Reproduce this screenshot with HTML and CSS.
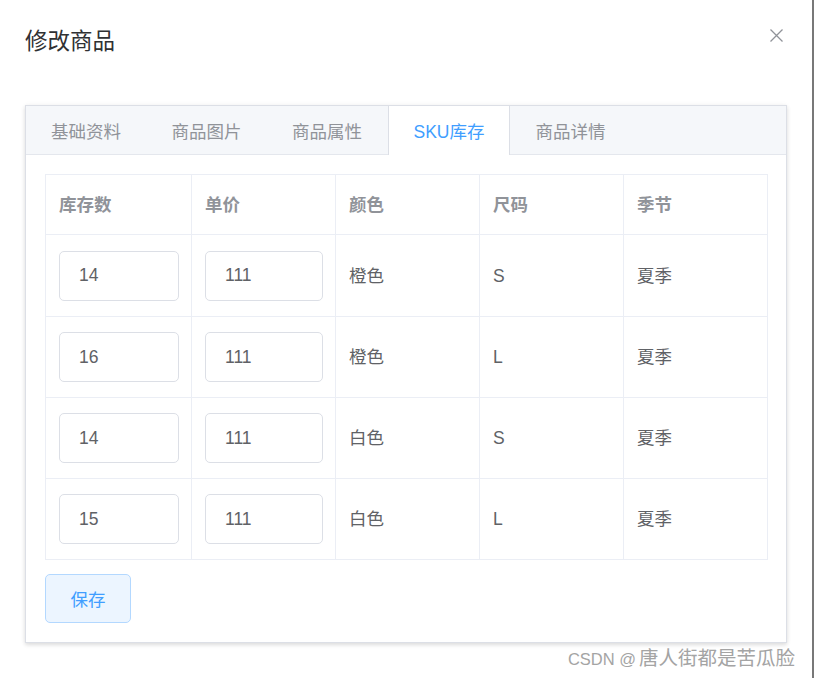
FILE: index.html
```html
<!DOCTYPE html>
<html lang="zh-CN">
<head>
<meta charset="utf-8">
<title>修改商品</title>
<link rel="stylesheet" href="styles.css">
</head>
<body>
<div class="page">
  <div class="dialog">
    <header class="dlg-head">
      <h1 class="dlg-title">修改商品</h1>
      <button class="dlg-close" aria-label="关闭">
        <svg width="13" height="13" viewBox="0 0 13 13"><path d="M0.5 0.5 L12.5 12.5 M12.5 0.5 L0.5 12.5" stroke="#909399" stroke-width="1.3" fill="none"/></svg>
      </button>
    </header>
    <div class="card">
      <div class="tabs-head">
        <div class="tab">基础资料</div>
        <div class="tab">商品图片</div>
        <div class="tab">商品属性</div>
        <div class="tab active">SKU库存</div>
        <div class="tab">商品详情</div>
      </div>
      <div class="tab-body">
        <table class="sku">
          <colgroup>
            <col class="c-first">
            <col class="c-std">
            <col class="c-std">
            <col class="c-std">
            <col class="c-std">
          </colgroup>
          <thead>
            <tr><th>库存数</th><th>单价</th><th>颜色</th><th>尺码</th><th>季节</th></tr>
          </thead>
          <tbody>
            <tr class="first-row"><td><input class="inp" value="14"></td><td><input class="inp" value="111"></td><td>橙色</td><td>S</td><td>夏季</td></tr>
            <tr><td><input class="inp" value="16"></td><td><input class="inp" value="111"></td><td>橙色</td><td>L</td><td>夏季</td></tr>
            <tr><td><input class="inp" value="14"></td><td><input class="inp" value="111"></td><td>白色</td><td>S</td><td>夏季</td></tr>
            <tr><td><input class="inp" value="15"></td><td><input class="inp" value="111"></td><td>白色</td><td>L</td><td>夏季</td></tr>
          </tbody>
        </table>
        <button class="btn-save">保存</button>
      </div>
    </div>
    <div class="watermark"><span class="wm-latin">CSDN @</span>唐人街都是苦瓜脸<span class="wm-ghost">博客</span></div>
  </div>
  <div class="edge"></div>
</div>
</body>
</html>
```

FILE: styles.css
```css
html, body {
  margin: 0;
  padding: 0;
  background: #fff;
}
body {
  font-family: "Liberation Sans", "Noto Sans CJK SC", sans-serif;
  color: #606266;
}
.page {
  display: flex;
  height: 678px;
  overflow: hidden;
}
.dialog {
  flex: 1;
  display: flex;
  flex-direction: column;
  background: #fff;
}
.edge {
  width: 2px;
  background: #787878;
}
.dlg-head {
  display: flex;
  justify-content: space-between;
  align-items: flex-start;
  height: 105px;
  box-sizing: border-box;
  padding: 28px 29px 0 25px;
}
.dlg-title {
  margin: 0;
  font-size: 22.5px;
  line-height: 28px;
  font-weight: normal;
  color: #303133;
}
.dlg-close {
  margin-top: 1px;
  padding: 0;
  border: 0;
  background: transparent;
  width: 13px;
  height: 13px;
  line-height: 0;
}
.card {
  margin: 0 25px;
  border: 1px solid #dcdfe6;
  background: #fff;
  box-shadow: 0 2px 4px 0 rgba(0, 0, 0, 0.12), 0 0 6px 0 rgba(0, 0, 0, 0.04);
}
.tabs-head {
  display: flex;
  height: 48px;
  background: #f5f7fa;
  border-bottom: 1px solid #e4e7ed;
}
.tab {
  padding: 0 25px;
  height: 48px;
  line-height: 52px;
  font-size: 17.5px;
  color: #909399;
  white-space: nowrap;
}
.tab:first-child {
  padding-left: 25px;
}
.tab:nth-child(2),
.tab:nth-child(3),
.tab:nth-child(4) {
  margin-left: 0.5px;
}
.tab.active {
  color: #409eff;
  background: #fff;
  border-left: 1px solid #dcdfe6;
  border-right: 1px solid #dcdfe6;
  height: 49px;
}
.tab-body {
  padding: 19px 18px 19px 19px;
}
.sku {
  border-collapse: collapse;
  table-layout: fixed;
  width: 722px;
}
.c-first { width: 146px; }
.c-std { width: 144px; }
.sku th,
.sku td {
  border: 1px solid #ebeef5;
  padding: 0 12px 0 13px;
  text-align: left;
  font-size: 17.5px;
  line-height: 24px;
  color: #606266;
}
.sku th {
  height: 59px;
  color: #909399;
  font-weight: bold;
}
.sku td {
  height: 80px;
}
.sku .first-row td {
  height: 81px;
}
.inp {
  display: block;
  box-sizing: border-box;
  width: 100%;
  height: 50px;
  margin: 0;
  padding: 0 19px;
  border: 1px solid #dcdfe6;
  border-radius: 5px;
  background: #fff;
  font-family: "Liberation Sans", "Noto Sans CJK SC", sans-serif;
  font-size: 17.5px;
  color: #606266;
  outline: none;
}
.btn-save {
  display: block;
  margin-top: 14px;
  width: 86px;
  height: 49px;
  padding: 0;
  background: #ecf5ff;
  border: 1px solid #b3d8ff;
  border-radius: 5px;
  color: #409eff;
  font-family: "Liberation Sans", "Noto Sans CJK SC", sans-serif;
  font-size: 17.5px;
}
.watermark {
  position: relative;
  align-self: flex-end;
  margin: 4px 17px 0 0;
  font-size: 19.5px;
  line-height: 22px;
  color: #a4a4a4;
  white-space: nowrap;
}
.wm-latin {
  font-size: 16.5px;
  margin-right: 3px;
}
.wm-ghost {
  position: absolute;
  right: -14px;
  top: 2px;
  font-size: 15px;
  color: #ececec;
  z-index: -1;
}
```
